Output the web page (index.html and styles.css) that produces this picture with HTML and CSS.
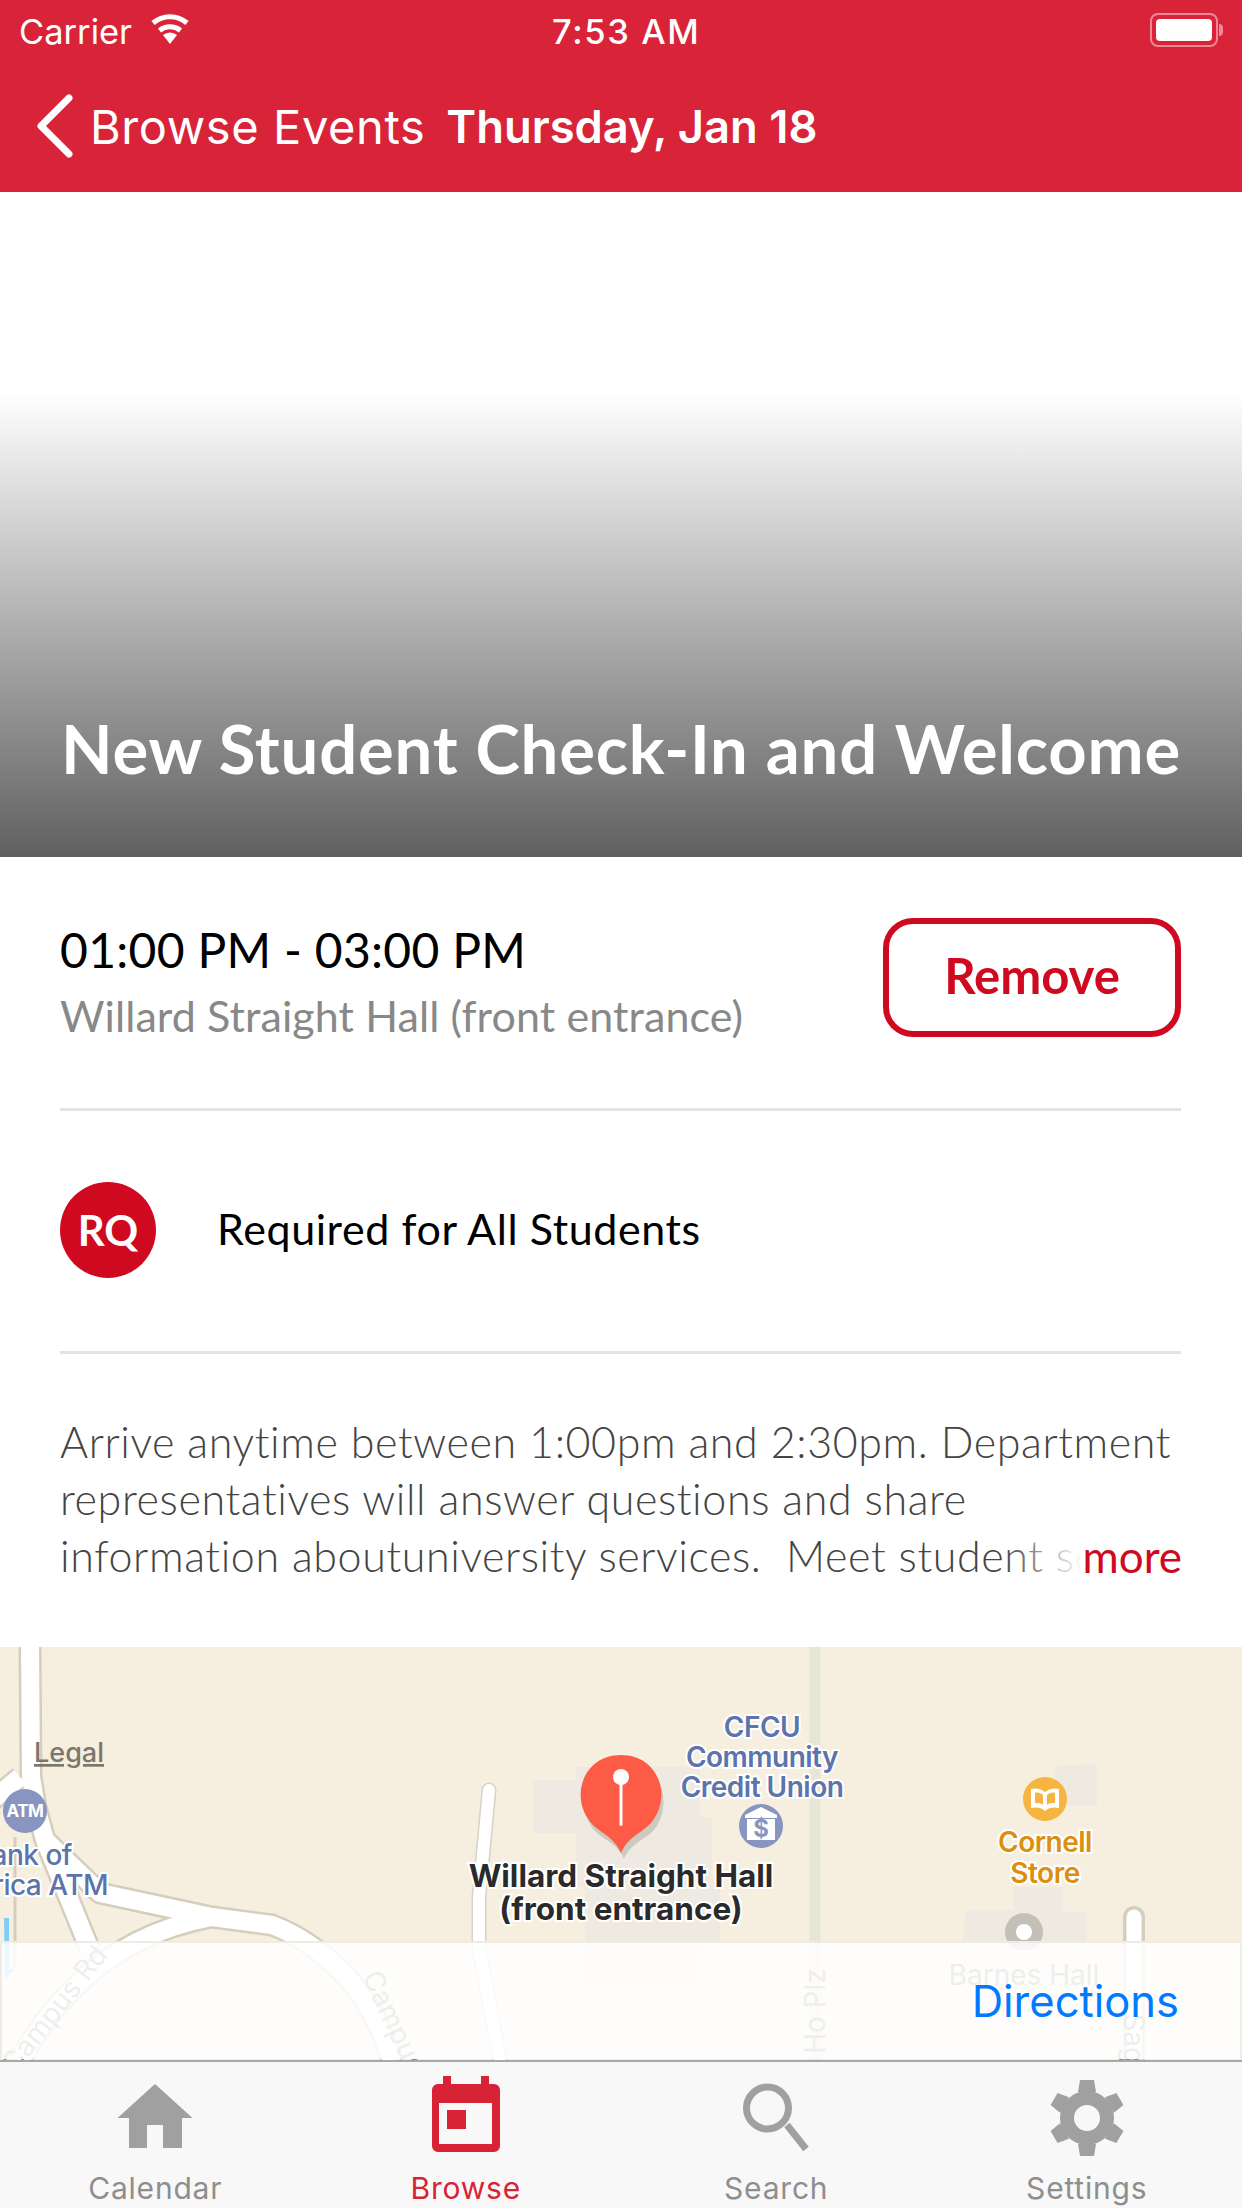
FILE: index.html
```html
<!DOCTYPE html>
<html lang="en">
<head>
  <meta charset="UTF-8" />
  <meta name="viewport" content="width=device-width, initial-scale=1.0"/>
  <title>New Student Check-In and Welcome</title>
  <link rel="stylesheet" href="styles.css">
</head>
<body>
<div class="app">

  <header class="top-bar">
    <div class="status-bar">
      <div class="carrier">
        <span>Carrier</span>
        <svg class="wifi" width="42" height="30" viewBox="0 0 42 30">
          <path d="M21 30 L14 21 A11 11 0 0 1 28 21 Z" fill="#fff"/>
          <path d="M10.5 16.5 A17 17 0 0 1 31.5 16.5" fill="none" stroke="#fff" stroke-width="5"/>
          <path d="M4 9 A26 26 0 0 1 38 9" fill="none" stroke="#fff" stroke-width="5"/>
        </svg>
      </div>
      <div class="clock">7:53 AM</div>
      <div class="battery"><div class="battery-fill"></div></div>
      <div class="battery-tip"></div>
    </div>
    <div class="nav-bar">
      <svg class="back" width="40" height="66" viewBox="0 0 40 66">
        <path d="M34 5 L6 33 L34 61" fill="none" stroke="#fff" stroke-width="7" stroke-linecap="round" stroke-linejoin="round"/>
      </svg>
      <span class="back-label">Browse Events</span>
      <span class="nav-title">Thursday, Jan 18</span>
    </div>
  </header>

  <section class="hero">
    <h1>New Student Check-In and Welcome</h1>
  </section>

  <section class="info-row">
    <div class="info-text">
      <div class="time">01:00 PM - 03:00 PM</div>
      <div class="place">Willard Straight Hall (front entrance)</div>
    </div>
    <button class="remove-btn">Remove</button>
  </section>

  <section class="tag-row">
    <div class="tag-badge">RQ</div>
    <div class="tag-label">Required for All Students</div>
  </section>

  <section class="desc">
    <p>Arrive anytime between 1:00pm and 2:30pm. Department<br>representatives will answer questions and share<br>information aboutuniversity services.&nbsp; Meet student se</p>
    <div class="more"><span class="more-fade"></span><span class="more-label">more</span></div>
  </section>

  <section class="map">
    <svg class="map-art" width="1242" height="414" viewBox="0 0 1242 414">
      <!-- buildings -->
      <g fill="#efeae1">
        <path d="M533 133 H580 V186 H533 Z"/>
        <path d="M576 120 H700 V170 H712 V230 H720 V300 H700 V340 H585 V240 H576 Z"/>
        <path d="M1055 119 L1097 117 V158 H1055 Z"/>
        <path d="M1013 240 H1063 V265 H1086 V300 H962 L966 263 H1013 Z"/>
      </g>
      <!-- roads -->
      <path d="M15 190 V320" stroke="#d6cdbd" stroke-width="3"/>
      <g fill="none" stroke="#d6cdbd" stroke-width="23" stroke-linejoin="round">
        <path d="M30 0 L31 130 L36 160 L45 193 L90 303"/>
        <path d="M-10 155 L20 130"/>
        <path d="M45 193 L100 246 L212 270 L272 278 Q310 292 345 328 Q375 360 392 414"/>
        <path d="M212 270 Q130 285 75 340 Q40 375 20 414"/>
      </g>
      <g fill="none" stroke="#fff" stroke-width="18" stroke-linejoin="round">
        <path d="M30 0 L31 130 L36 160 L45 193 L90 303"/>
        <path d="M-10 155 L20 130"/>
        <path d="M45 193 L100 246 L212 270 L272 278 Q310 292 345 328 Q375 360 392 414"/>
        <path d="M212 270 Q130 285 75 340 Q40 375 20 414"/>
      </g>
      <path d="M489 143 L479 250 L479 300 L500 414" fill="none" stroke="#d6d2c6" stroke-width="15" stroke-linecap="round"/>
      <path d="M489 143 L479 250 L479 300 L500 414" fill="none" stroke="#fff" stroke-width="12" stroke-linecap="round"/>
      <path d="M815 0 V414" stroke="#e6e5d8" stroke-width="11"/>
      <path d="M1134 270 V414" stroke="#d6cdbd" stroke-width="22" stroke-linecap="round"/>
      <path d="M1134 270 V414" stroke="#fff" stroke-width="15" stroke-linecap="round"/>
      <path d="M4 271 H9 V322 L15 322 L5 332 Z" fill="#7fcdf9"/>

      <!-- faint road names, sit under the directions bar -->
      <g class="road-name">
        <text transform="translate(62 368) rotate(-52)">Campus Rd</text>
        <text transform="translate(394 398) rotate(65)">Campus Rd</text>
        <text transform="translate(825 364) rotate(-90)">Ho Plz</text>
        <text transform="translate(1124 400) rotate(90)">Sage</text>
      </g>

      <!-- places -->
      <circle cx="1024" cy="285" r="19" fill="#c4c0b8"/>
      <circle cx="1024" cy="285" r="8" fill="#fff"/>
      <text class="barnes" x="1024" y="338">Barnes Hall</text>

      <text class="legal" x="34" y="115">Legal</text>

      <circle cx="25" cy="164" r="22" fill="#8795c0"/>
      <text class="atm" x="25" y="170">ATM</text>
      <text class="poi poi-blue end" x="72" y="218">Bank of</text>
      <text class="poi poi-blue end" x="108" y="248">America ATM</text>

      <text class="poi poi-blue" x="762" y="90">CFCU</text>
      <text class="poi poi-blue" x="762" y="120">Community</text>
      <text class="poi poi-blue" x="762" y="150">Credit Union</text>
      <circle cx="761" cy="179" r="22" fill="#8795c0"/>
      <path d="M745 168 L761 160 L777 168 V171 H745 Z M747 172 H775 V193 H747 Z" fill="#fff"/>
      <text class="bank-sign" x="761" y="190">$</text>

      <circle cx="1045" cy="152" r="22" fill="#f5b540"/>
      <path d="M1045 145 C1040 141 1035 141 1031 142 V161 C1036 160 1041 160 1045 164 C1049 160 1054 160 1059 161 V142 C1055 141 1050 141 1045 145 Z" fill="#fff"/>
      <path d="M1045 146 V160 M1035 146 C1038 145 1041 146 1043 148 V158 C1041 156 1038 156 1035 156 Z M1055 146 C1052 145 1049 146 1047 148 V158 C1049 156 1052 156 1055 156 Z" fill="#f5b540"/>
      <text class="poi poi-gold" x="1045" y="205">Cornell</text>
      <text class="poi poi-gold" x="1045" y="236">Store</text>

      <text class="poi poi-dark" x="621" y="240">Willard Straight Hall</text>
      <text class="poi poi-dark" x="621" y="273">(front entrance)</text>

      <!-- pin -->
      <path d="M621 208 C614 192 602 190 592 180 C572 158 580 110 621 108 C662 110 670 158 650 180 C640 190 628 192 621 208 Z" fill="#000" opacity="0.14" transform="translate(3 4)"/>
      <path d="M621 206 C614 190 602 187 592 177 C569 152 582 108 621 108 C660 108 673 152 650 177 C640 187 628 190 621 206 Z" fill="#fd5b45"/>
      <rect x="619.5" y="132" width="3" height="47" rx="1.5" fill="#fff"/>
      <circle cx="621" cy="130" r="8" fill="#fff"/>
    </svg>
    <div class="directions-bar"><span class="directions">Directions</span></div>
  </section>

  <nav class="tab-bar">
    <div class="tab">
      <svg width="80" height="80" viewBox="0 0 80 80">
        <path d="M40 6 L77.500 40 H67 V70 H48 V47 H32 V70 H14 V40 H2.500 Z" fill="#a0a0a0"/>
      </svg>
      <span>Calendar</span>
    </div>
    <div class="tab active">
      <svg class="cal-icon" width="80" height="80" viewBox="0 0 80 80">
        <path d="M12 6 H17 V-2 H25 V6 H55 V-2 H63 V6 H68 A6 6 0 0 1 74 12 V68 A6 6 0 0 1 68 74 H12 A6 6 0 0 1 6 68 V12 A6 6 0 0 1 12 6 Z M13 25 V66 H66 V25 Z" fill="#d82336" fill-rule="evenodd"/>
        <rect x="21" y="32" width="19" height="19" fill="#d82336"/>
      </svg>
      <span>Browse</span>
    </div>
    <div class="tab">
      <svg width="80" height="80" viewBox="0 0 80 80">
        <circle cx="31.500" cy="30" r="21" fill="none" stroke="#a0a0a0" stroke-width="7"/>
        <path d="M51 47 L70 71" stroke="#a0a0a0" stroke-width="7"/>
      </svg>
      <span>Search</span>
    </div>
    <div class="tab">
      <svg width="80" height="80" viewBox="0 0 80 80">
        <g fill="#a0a0a0">
          <path d="M31 14 L33 2 H47 L49 14 Z"/>
          <path d="M31 14 L33 2 H47 L49 14 Z" transform="rotate(60 40 40)"/>
          <path d="M31 14 L33 2 H47 L49 14 Z" transform="rotate(120 40 40)"/>
          <path d="M31 14 L33 2 H47 L49 14 Z" transform="rotate(180 40 40)"/>
          <path d="M31 14 L33 2 H47 L49 14 Z" transform="rotate(240 40 40)"/>
          <path d="M31 14 L33 2 H47 L49 14 Z" transform="rotate(300 40 40)"/>
        </g>
        <circle cx="40" cy="40" r="20" fill="none" stroke="#a0a0a0" stroke-width="14"/>
      </svg>
      <span>Settings</span>
    </div>
  </nav>

</div>
</body>
</html>
```

FILE: styles.css
```css
* {
  box-sizing: border-box;
}

body {
  margin: 0;
  background: #fff;
  font-family: "Lato", "Open Sans", sans-serif;
}

.app {
  width: 1242px;
  height: 2208px;
  display: flex;
  flex-direction: column;
  overflow: hidden;
}

/* red header */
.top-bar {
  height: 192px;
  background: #d82338;
  color: #fff;
  font-family: "Inter", "Roboto", sans-serif;
  flex: none;
}

.status-bar {
  height: 62px;
  display: flex;
  align-items: center;
  position: relative;
  padding: 0 19px;
  font-size: 34.5px;
}

.carrier {
  display: flex;
  align-items: center;
  gap: 17px;
}

.wifi {
  margin-top: -4px;
}

.clock {
  position: absolute;
  left: 552px;
  font-weight: 500;
  letter-spacing: 1.6px;
}

.battery {
  position: absolute;
  right: 24px;
  top: 13px;
  width: 68px;
  height: 34px;
  border: 2px solid #ee8a95;
  border-radius: 8px;
  padding: 4px;
}

.battery-fill {
  height: 100%;
  background: #fff;
  border-radius: 4px;
}

.battery-tip {
  position: absolute;
  right: 19px;
  top: 24px;
  width: 4px;
  height: 12px;
  background: #ee8a95;
  border-radius: 0 4px 4px 0;
}

.nav-bar {
  height: 130px;
  display: flex;
  align-items: center;
  padding: 0 0 2px 35px;
}

.back {
  margin-right: 15px;
}

.back-label {
  font-size: 47px;
  letter-spacing: 0.6px;
  margin-right: 21px;
}

.nav-title {
  font-size: 45.3px;
  font-weight: 600;
}

/* event image placeholder */
.hero {
  height: 665px;
  flex: none;
  display: flex;
  align-items: flex-end;
  padding: 0 0 71px 61px;
  background: linear-gradient(to bottom, #fff 0, #fff 200px, #606060 100%);
}

.hero h1 {
  margin: 0;
  color: #fff;
  font-size: 67px;
  line-height: 76px;
  font-weight: 700;
  letter-spacing: 0.8px;
  white-space: nowrap;
}

.info-row {
  flex: none;
  height: 254px;
  margin: 0 61px 0 60px;
  border-bottom: 3px solid #e3e3e3;
  display: flex;
  justify-content: space-between;
  padding-top: 61px;
}

.info-text {
  padding-top: 4px;
}

.time {
  font-size: 48px;
  line-height: 56px;
  letter-spacing: 0.3px;
  color: #000;
}

.place {
  font-size: 43px;
  line-height: 56px;
  letter-spacing: 0.1px;
  margin-top: 10px;
  color: #888;
}

.remove-btn {
  width: 298px;
  height: 119px;
  background: #fff;
  border: 6px solid #cf0a20;
  border-radius: 30px;
  color: #cf0a20;
  font-family: inherit;
  font-size: 49px;
  font-weight: 700;
  padding-bottom: 6px;
}

.tag-row {
  flex: none;
  height: 243px;
  margin: 0 61px 0 60px;
  border-bottom: 3px solid #e3e3e3;
  display: flex;
  align-items: center;
  gap: 61px;
  padding-bottom: 3px;
}

.tag-badge {
  width: 96px;
  height: 96px;
  border-radius: 50%;
  background: #cf0a20;
  color: #fff;
  font-size: 42px;
  font-weight: 700;
  display: flex;
  align-items: center;
  justify-content: center;
}

.tag-label {
  font-size: 43px;
  letter-spacing: 0.6px;
  color: #000;
  margin-top: -2px;
}

.desc {
  flex: none;
  height: 293px;
  padding: 59px 0 0 60px;
  position: relative;
}

.desc p {
  margin: 0;
  height: 171px;
  overflow: hidden;
  font-size: 43px;
  line-height: 57px;
  letter-spacing: 0.6px;
  font-weight: 300;
  color: #444;
}

.more {
  position: absolute;
  right: 60px;
  top: 173px;
  height: 57px;
  display: flex;
  align-items: center;
  background: #fff;
}

.more-fade {
  position: absolute;
  right: 100%;
  top: 0;
  width: 80px;
  height: 57px;
  background: linear-gradient(to right, rgba(255, 255, 255, 0), #fff);
}

.more-label {
  font-size: 44px;
  color: #cf0a20;
}

/* map */
.map {
  flex: none;
  height: 413px;
  background: #f6efe0;
  position: relative;
  overflow: hidden;
}

.map-art {
  display: block;
}

.map-art text {
  font-family: "Inter", "Roboto", sans-serif;
  text-anchor: middle;
}

.poi {
  font-size: 28px;
  font-weight: 600;
  letter-spacing: -0.5px;
  paint-order: stroke;
  stroke: #fff;
  stroke-width: 4px;
}

.poi-blue {
  fill: #5b74ab;
}

.poi-gold {
  fill: #dc8f0f;
}

.poi-dark {
  fill: #2a2a2a;
  font-size: 31.5px;
  font-weight: 700;
  letter-spacing: 0;
}

.map-art .end {
  text-anchor: end;
  font-weight: 500;
}

.map-art .legal {
  font-size: 27px;
  font-weight: 500;
  fill: #7c776c;
  text-decoration: underline;
  text-anchor: start;
}

.atm {
  font-size: 17px;
  font-weight: 700;
  fill: #fff;
  letter-spacing: -0.5px;
}

.bank-sign {
  font-size: 24px;
  font-weight: 700;
  fill: #8795c0;
}

.barnes {
  font-size: 28px;
  fill: #8d8a82;
}

.road-name {
  font-size: 28px;
  fill: #8d8a82;
}

.directions-bar {
  position: absolute;
  left: 0;
  right: 0;
  top: 294px;
  bottom: 1px;
  background: rgba(255, 255, 255, 0.85);
  border-top: 2px solid #efece6;
  border-left: 2px solid #efece6;
  border-right: 2px solid #efece6;
  display: flex;
  align-items: center;
  justify-content: flex-end;
  padding: 0 61px 0 0;
}

.directions {
  font-family: "Inter", "Roboto", sans-serif;
  font-size: 43.5px;
  color: #007aff;
}

/* tab bar */
.tab-bar {
  flex: 1;
  background: #f8f8f8;
  border-top: 2px solid #a8a8a8;
  display: flex;
  padding: 16px 0 0 0;
}

.tab {
  flex: 1;
  display: flex;
  flex-direction: column;
  align-items: center;
  font-family: "Inter", "Roboto", sans-serif;
  font-size: 30px;
  letter-spacing: 0.8px;
  color: #8e8e8e;
}

.tab svg {
  display: block;
}

.cal-icon {
  overflow: visible;
}

.tab span {
  line-height: 40px;
  margin-top: 10px;
}

.tab.active {
  color: #d82336;
}
```
